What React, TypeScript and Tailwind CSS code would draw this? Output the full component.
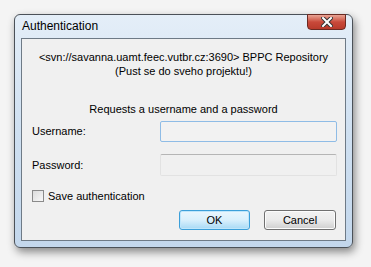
export default function App() {
  return (
    <div className="w-[371px] h-[267px] bg-[#f4f4f4] pt-[14px] pl-[14px] font-['Liberation_Sans',sans-serif] text-[11px] text-black">
      <div className="w-[339px] h-[234px] rounded-[6px] border border-[#4b5158] bg-gradient-to-b from-[#e4eef8] via-[#cfe0f1] to-[#c3d7ec] shadow-[2px_4px_8px_rgba(0,0,0,0.45)] flex flex-col">
        {/* title bar */}
        <div className="h-[23px] flex items-start justify-between pl-[7px] pr-[6px]">
          <span className="mt-[4px] text-[12px] leading-[14px] text-black">Authentication</span>
          <div className="-mt-px w-[39px] h-[16px] rounded-b-[4px] border border-[#6b2a22] bg-gradient-to-b from-[#e8a394] via-[#c9493a] to-[#b83a2b] flex items-center justify-center">
            <svg width="12" height="10" viewBox="0 0 12 10">
              <path d="M2 1 L10 9 M10 1 L2 9" stroke="#333" strokeWidth="4" strokeLinecap="square" />
              <path d="M2 1 L10 9 M10 1 L2 9" stroke="#fff" strokeWidth="2" strokeLinecap="square" />
            </svg>
          </div>
        </div>
        {/* client area */}
        <div className="mx-[6px] w-[325px] h-[203px] border border-[#6e7a86] bg-[#f0f0f0] flex flex-col">
          <div className="mt-[11px] text-center leading-[14px] whitespace-nowrap">
            &lt;svn://savanna.uamt.feec.vutbr.cz:3690&gt; BPPC Repository
          </div>
          <div className="text-center leading-[14px]">(Pust se do sveho projektu!)</div>
          <div className="mt-[24px] text-center leading-[14px]">Requests a username and a password</div>
          <div className="mt-[5px] flex items-center justify-between pl-[10px] pr-[8px]">
            <span>Username:</span>
            <div className="w-[177px] h-[21px] rounded-[2px] border border-[#8fbce6] bg-[#f2f2f2]" />
          </div>
          <div className="mt-[12px] flex items-center justify-between pl-[10px] pr-[8px]">
            <span>Password:</span>
            <div className="w-[177px] h-[22px] rounded-[2px] border border-[#e2e2e2] border-t-[#b5b5b5] bg-[#f0f0f0]" />
          </div>
          <div className="mt-[13px] flex items-center pl-[10px]">
            <div className="w-[12px] h-[12px] border border-[#8a8a8a] bg-gradient-to-br from-[#dcdcdc] to-[#f8f8f8]" />
            <span className="ml-[4px] leading-[14px]">Save authentication</span>
          </div>
          <div className="mt-[7px] flex justify-end gap-[14px] pr-[9px]">
            <div className="w-[71px] h-[20px] rounded-[3px] border border-[#3c9fd9] bg-gradient-to-b from-[#eaf6fd] via-[#d9f0fc] to-[#a7d9f5] shadow-[inset_0_0_0_1px_#bfe6fb] flex items-center justify-center leading-[14px]">
              OK
            </div>
            <div className="w-[72px] h-[20px] rounded-[3px] border border-[#707070] bg-gradient-to-b from-[#f2f2f2] via-[#ebebeb] to-[#cfcfcf] shadow-[inset_0_0_0_1px_#fcfcfc] flex items-center justify-center leading-[14px]">
              Cancel
            </div>
          </div>
        </div>
      </div>
    </div>
  );
}
